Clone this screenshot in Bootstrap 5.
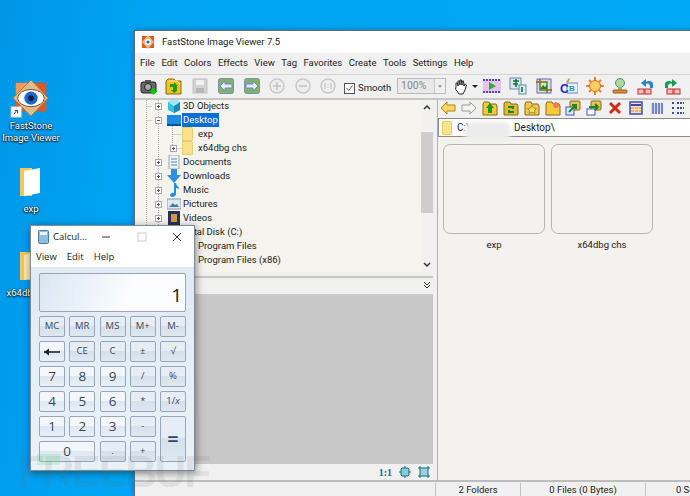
<!DOCTYPE html>
<html lang="en">
<head>
  <meta charset="UTF-8">
  <title>FastStone Image Viewer 7.5</title>
  <link href="https://cdn.jsdelivr.net/npm/bootstrap@5.3.1/dist/css/bootstrap.min.css" rel="stylesheet">
  <style>
    html, body { height: 100%; overflow: hidden; }
    body { background: #00a0ee; font-family: Roboto, sans-serif; font-size: 9.5px; color: #1c1c1c; }
    .desk { position: relative; width: 690px; height: 496px; overflow: hidden; background: linear-gradient(100deg, #0096e6, #00a4f2 20%, #00aaf8); }
    .desk-icon { position: absolute; width: 62px; color: #fff; text-align: center; line-height: 12px; font-size: 9.5px; text-shadow: 0 0 2px #000, 0 1px 2px #000; }
    .fsv-win { position: absolute; left: 134px; top: 30px; width: 560px; height: 467px; background: #f0f0f0; border: 1px solid #56707f; box-shadow: 0 0 6px rgba(0,0,0,.3); display: flex; flex-direction: column; }
    .fsv-title { height: 22px; background: #fff; gap: 7px; padding-left: 6px; flex: none; }
    .fsv-menu { height: 21px; background: #f0f0f0; gap: 6.5px; padding-left: 5px; flex: none; }
    .fsv-tools { height: 26px; position: relative; border-top: 1px solid #d4d4d0; border-bottom: 2px solid #c6c6c2; flex: none; }
    .tb-ic { position: absolute; top: 0; }
    .fsv-tools .tb-ic { top: 2px; }
    .fsv-body { flex: 1; min-height: 0; }
    .left-col { width: 298px; display: flex; flex-direction: column; flex: none; }
    .col-gutter { width: 5px; border-right: 1px solid #b0b0ae; flex: none; }
    .tree-wrap { height: 172px; background: #f4f3ee; overflow: hidden; position: relative; flex: none; }
    .tree-lines { position: absolute; left: 0; top: 0; }
    .tree-list { position: relative; margin-top: -1px; }
    .tree-row { height: 14px; display: flex; align-items: center; white-space: nowrap; position: relative; }
    .exp-box { width: 7px; height: 7px; flex: none; display: block; }
    .tree-ic { width: 14px; height: 14px; flex: none; margin: 0 2px 0 5px; }
    .sel-row { background: #0a6fd4; color: #fff; padding: 0 1px; line-height: 14px; margin-left: -1px; }
    .scroll-bar { position: absolute; right: 0; top: 0; bottom: 0; width: 12px; background: #f1f1ee; }
    .scroll-thumb { position: absolute; left: 0; right: 0; top: 32px; height: 81px; background: #cdcdcd; }
    .scroll-up { position: absolute; left: 2px; top: 4px; }
    .scroll-down { position: absolute; left: 2px; bottom: 4px; }
    .split-bar { height: 22px; background: #f0f0f0; position: relative; flex: none; }
    .split-line { position: absolute; left: 0; right: 0; top: 4px; height: 2px; background: #c6c6c2; }
    .split-chev { position: absolute; right: 2px; top: 9px; }
    .preview-box { height: 170px; background: #c8c8c8; flex: none; }
    .preview-foot { height: 16px; gap: 7px; padding-right: 3px; color: #117070; font-family: "Liberation Serif", serif; font-weight: 700; font-size: 10px; flex: none; }
    .right-col { flex: 1; display: flex; flex-direction: column; background: #f3f2ee; min-width: 0; }
    .nav-tools { height: 18px; position: relative; background: #f0f0f0; flex: none; }
    .addr-bar { height: 19px; background: #fff; border: 1px solid #8a8a8a; border-right: 0; padding-left: 3px; gap: 5px; position: relative; flex: none; font-size: 10px; }
    .addr-blur { position: absolute; left: 25px; top: 3px; width: 47px; height: 19px; background: #ececec; border-radius: 8px; filter: blur(2px); }
    .thumb-list { padding: 7px 5px; gap: 6px; }
    .thumb-cell { width: 102px; text-align: center; }
    .thumb-box { height: 90px; border: 1px solid #b5b5b2; border-radius: 7px; margin-bottom: 4px; }
    .fsv-status { height: 16px; background: #f0f0f0; border-top: 2px solid #bdbdbd; flex: none; position: relative; }
    .stat-cell { position: absolute; top: 1px; bottom: 0; border-left: 1px solid #c2c2c2; text-align: center; line-height: 14px; white-space: nowrap; }
    .calc-win { position: absolute; left: 30px; top: 225px; width: 165px; height: 246px; background: linear-gradient(#dfe9f4, #eaf1f8); border: 1px solid #7f8a96; box-shadow: 1px 2px 8px rgba(0,0,0,.45); font-family: "Open Sans", sans-serif; }
    .calc-title { height: 22px; background: #fff; padding-left: 7px; gap: 4px; font-size: 9.5px; position: relative; }
    .calc-menu { height: 19px; background: #fff; gap: 10px; padding-left: 5px; font-size: 9.5px; }
    .calc-disp { margin: 6px 8px 3px; height: 39px; border: 1px solid #98a5b4; border-radius: 2px; background: linear-gradient(110deg, #dbe6f3, #fafcfe 60%); text-align: right; font-size: 19px; line-height: 43px; padding-right: 3px; color: #222; }
    .calc-grid { display: grid; grid-template-columns: repeat(5, 26px); grid-auto-rows: 21px; gap: 4px 4.25px; padding: 0 8px; }
    .calc-key { border: 1px solid #98a7b8; border-radius: 2px; background: linear-gradient(#f3f7fb 45%, #dde7f1 50%, #e9f0f7); color: #39475a; font-size: 13.5px; display: flex; align-items: center; justify-content: center; }
    .calc-key.k-fn { background: linear-gradient(#e6edf5 45%, #d5e0eb 50%, #dfe8f1); font-size: 9.5px; font-weight: 500; }
    .k-wide { grid-column: span 2; }
    .calc-key.k-tall { grid-row: span 2; font-size: 20px; font-weight: 600; }
    .win-ctl { position: absolute; top: 5px; }
    .water-mark { position: absolute; left: 18px; top: 450px; font-family: "Liberation Sans", sans-serif; font-weight: 700; font-size: 44px; letter-spacing: -2.5px; color: rgba(110,110,110,.13); line-height: 44px; pointer-events: none; }
    .water-tab { position: absolute; left: 37px; top: 454px; width: 23px; height: 11px; background: rgba(120,220,150,.28); }
    .smooth-chk { left: 209px; top: 6px; gap: 3px; }
    .smooth-box { width: 11px; height: 11px; border: 1px solid #555; background: #fff; display: block; }
    .zoom-combo { left: 262px; top: 3px; width: 49px; height: 16px; background: #e9e9e9; border: 1px solid #bbb; color: #888; padding-left: 3px; line-height: 14px; font-size: 10.5px; }
    .zoom-btn { position: absolute; right: 0; top: 0; bottom: 0; width: 11px; background: #f0f0f0; border-left: 1px solid #ccc; }
    .zoom-btn::after { content: ""; position: absolute; left: 3px; top: 6px; border: 2px solid transparent; border-top: 3px solid #999; }
    .hand-arrow { left: 337px; top: 10px; width: 0; height: 0; border: 3px solid transparent; border-top-color: #222; }
  </style>
</head>
<body>
<div class="desk">
  <div class="desk-icon" style="left:0;top:80px">
    <svg width="44" height="40" viewBox="0 0 44 42" class="d-block mx-auto">
      <rect x="6" y="3" width="32" height="30" fill="#e8561f"/>
      <rect x="6" y="3" width="14" height="14" fill="#f39a5a"/>
      <path d="M22 0L40 19 22 38 3 19z" fill="#e0bd86" stroke="#a97a44"/>
      <ellipse cx="22" cy="19" rx="14" ry="9" fill="#fff" stroke="#6b4a2c"/>
      <circle cx="22" cy="19" r="7" fill="#1f66c9"/><circle cx="22" cy="19" r="3" fill="#0b1d45"/>
      <rect x="1" y="28" width="11" height="11" fill="#fff" stroke="#bbb"/>
      <path d="M4 36l3-4M5 32h3v3" stroke="#1a3f8a" fill="none"/>
    </svg>
    <div class="desk-label">FastStone<br>Image Viewer</div>
  </div>
  <div class="desk-icon" style="left:0;top:165px">
    <svg width="30" height="34" viewBox="0 0 30 34" class="d-block mx-auto">
      <path d="M4 3h12v28H4z" fill="#f1c65c"/><path d="M8 6l16-3v25l-16 3z" fill="#fff"/>
    </svg>
    <div class="mt-1">exp</div>
  </div>
  <div class="desk-icon" style="left:0;top:249px">
    <svg width="30" height="34" viewBox="0 0 30 34" class="d-block mx-auto">
      <path d="M4 3h12v28H4z" fill="#f1c65c"/><path d="M8 6l16-3v25l-16 3z" fill="#f6e7b4"/>
    </svg>
    <div class="mt-1">x64dbg chs</div>
  </div>

  <div class="fsv-win">
    <div class="fsv-title d-flex align-items-center">
      <svg width="14" height="14" viewBox="0 0 14 14"><rect x="1" y="1" width="12" height="12" fill="#e2561f"/><path d="M7 0l6 7-6 7-6-7z" fill="#e0bd86"/><circle cx="7" cy="7" r="3" fill="#fff"/><circle cx="7" cy="7" r="1.600" fill="#1f66c9"/></svg>
      <span>FastStone Image Viewer 7.5</span>
    </div>
    <div class="fsv-menu d-flex align-items-center">
      <span>File</span><span>Edit</span><span>Colors</span><span>Effects</span><span>View</span><span>Tag</span><span>Favorites</span><span>Create</span><span>Tools</span><span>Settings</span><span>Help</span>
    </div>
    <div class="fsv-tools" id="mainTools"></div>
    <div class="fsv-body d-flex">
      <div class="left-col">
        <div class="tree-wrap">
          <svg class="tree-lines" width="60" height="172">
            <path d="M11.500 0v172M23.500 0v172M11.500 6.500h5M11.500 20.500h5M37.500 26v22M37.500 34.500h10M37.500 48.500h10" stroke="#b0b0b0" stroke-dasharray="1 1" fill="none"/>
          </svg>
          <div id="treeRows" class="tree-list"></div>
          <div class="scroll-bar">
            <svg class="scroll-up" width="8" height="6" viewBox="0 0 8 6"><path d="M1 5l3-3 3 3" fill="none" stroke="#333" stroke-width="1.500"/></svg>
            <div class="scroll-thumb"></div>
            <svg class="scroll-down" width="8" height="6" viewBox="0 0 8 6"><path d="M1 1l3 3 3-3" fill="none" stroke="#333" stroke-width="1.500"/></svg>
          </div>
        </div>
        <div class="split-bar">
          <div class="split-line"></div>
          <svg class="split-chev" width="8" height="8" viewBox="0 0 8 8"><path d="M1 1l3 3 3-3M1 4l3 3 3-3" fill="none" stroke="#333"/></svg>
        </div>
        <div class="preview-box"></div>
        <div class="preview-foot d-flex align-items-center justify-content-end">
          <span>1:1</span>
          <svg width="12" height="12" viewBox="0 0 12 12"><path d="M3 2h6l1 1v6l-1 1H3l-1-1V3z" fill="#8cc8dc" stroke="#117070"/><path d="M6 0v2M6 10v2M0 6h2M10 6h2" stroke="#117070"/></svg>
          <svg width="12" height="12" viewBox="0 0 12 12"><rect x="2" y="2" width="8" height="8" fill="#9ccce0" stroke="#117070"/><path d="M0 2h2V0M10 0v2h2M12 10h-2v2M2 12v-2H0" fill="none" stroke="#117070"/></svg>
        </div>
      </div>
      <div class="col-gutter"></div>
      <div class="right-col">
        <div class="nav-tools" id="navTools"></div>
        <div class="addr-bar d-flex align-items-center">
          <svg width="10" height="14" viewBox="0 0 10 14"><path d="M.500.500h9v13h-9z" fill="#fbe08e" stroke="#eccb6a"/></svg>
          <span>C:\</span><span style="margin-left:39px">Desktop\</span>
          <span class="addr-blur"></span>
        </div>
        <div class="thumb-list d-flex">
          <div class="thumb-cell"><div class="thumb-box"></div>exp</div>
          <div class="thumb-cell"><div class="thumb-box"></div>x64dbg chs</div>
        </div>
      </div>
    </div>
    <div class="fsv-status">
      <div class="stat-cell" style="left:300px;width:85px">2 Folders</div>
      <div class="stat-cell" style="left:385px;width:125px">0 Files (0 Bytes)</div>
      <div class="stat-cell" style="left:510px;width:105px">0 Selected</div>
    </div>
  </div>

  <div class="calc-win">
    <div class="calc-title d-flex align-items-center">
      <svg width="11" height="14" viewBox="0 0 11 14"><rect x=".5" y=".5" width="10" height="13" rx="1" fill="#8fc0e4" stroke="#4b7ba3"/><rect x="2" y="2" width="7" height="3" fill="#eef6fc"/></svg>
      <span>Calcul...</span>
      <svg class="win-ctl" style="left:70px" width="10" height="12" viewBox="0 0 10 12"><path d="M1 6h8" stroke="#333"/></svg>
      <svg class="win-ctl" style="left:106px" width="10" height="12" viewBox="0 0 10 12"><rect x="1" y="2" width="8" height="8" fill="none" stroke="#ccc"/></svg>
      <svg class="win-ctl" style="left:141px" width="10" height="12" viewBox="0 0 10 12"><path d="M1 2l8 8M9 2l-8 8" stroke="#333"/></svg>
    </div>
    <div class="calc-menu d-flex align-items-center"><span>View</span><span>Edit</span><span>Help</span></div>
    <div class="calc-disp">1</div>
    <div class="calc-grid mt-1" id="calcKeys"></div>
  </div>
  <div class="water-tab"></div>
  <div class="water-mark">FREEBUF</div>
</div>
<script src="https://cdn.jsdelivr.net/npm/bootstrap@5.3.1/dist/js/bootstrap.bundle.min.js"></script>
<script>
  // toolbar glyphs, drawn on a 18x18 box
  const glyphs = {
    camera: '<rect x="1" y="5" width="15" height="11" rx="2" fill="#6a6a6a" stroke="#222"/><circle cx="8" cy="10" r="3.500" fill="#aaa" stroke="#222"/><rect x="5" y="3" width="6" height="2" fill="#555"/><path d="M12 11h3v3h2.500L13.500 18 9.500 14H12z" fill="#0c0"/>',
    open: '<path d="M1 4l2-2h6l2 2h5v13H1z" fill="#f2c21e" stroke="#8a6a10"/><path d="M4 4h8l3 3" fill="none" stroke="#fff2a0"/><path d="M5 7h4V5l4 4h-1v5l-3 2-3-3h2v-3H5z" fill="#1f9a12"/>',
    save: '<rect x="2" y="2" width="14" height="14" fill="#d2d2d2" stroke="#c0c0c0"/><rect x="5" y="3" width="8" height="5" fill="#efefef"/><rect x="5" y="11" width="8" height="5" fill="#b8b8b8"/>',
    left: '<rect x="1.500" y="1.500" width="15" height="15" rx="2" fill="#7fb16f" stroke="#7a93a8"/><path d="M3 9l5-5v3h7v4H8v3z" fill="#e6ecfb" stroke="#7486c4"/>',
    right: '<rect x="1.500" y="1.500" width="15" height="15" rx="2" fill="#7fb16f" stroke="#7a93a8"/><path d="M15 9l-5-5v3H3v4h7v3z" fill="#e6ecfb" stroke="#7486c4"/>',
    plus: '<circle cx="9" cy="9" r="7" fill="#eee" stroke="#c8c8c8" stroke-width="1.500"/><path d="M9 5v8M5 9h8" stroke="#c0c0c0" stroke-width="1.500"/>',
    minus: '<circle cx="9" cy="9" r="7" fill="#eee" stroke="#c8c8c8" stroke-width="1.500"/><path d="M5 9h8" stroke="#c0c0c0" stroke-width="1.500"/>',
    one: '<circle cx="9" cy="9" r="7" fill="#eee" stroke="#c8c8c8" stroke-width="1.500"/><path d="M6 6v6M9 7v1M9 10v1M12 6v6" stroke="#bbb"/>',
    hand: '<path d="M4 10V6h1.500L6 9V4h1.500L8 8V3h1.500L10 8V4h1.500L12 9l1-2 1.500 1-1.500 5-2 4H7L3.500 12z" fill="#fff" stroke="#222"/>',
    film: '<rect x="0" y="2" width="18" height="14" fill="#e6c4ee"/><path d="M0 3h18M0 15h18" stroke="#4a4ab0" stroke-width="2" stroke-dasharray="2 1"/><path d="M6 5l7 4-7 4z" fill="#3aa83a"/>',
    resize: '<rect x="1" y="1" width="11" height="11" fill="#dbe8f4" stroke="#6a88b0"/><rect x="10" y="8" width="7" height="9" fill="#dbe8f4" stroke="#6a88b0"/><path d="M4 4h6M7 2v8M4 7h5M13 10v5" stroke="#0a7a2a" stroke-width="1.600"/>',
    crop: '<rect x="2" y="2" width="14" height="14" fill="#cfe0ee" stroke="#6a6ab0"/><path d="M5 2v11h12M1 5h11v11" stroke="#8a6a10" stroke-width="1.500" fill="none"/><path d="M5 12l3-4 2 2 2-2v4z" fill="#1a8a1a"/>',
    cb: '<rect x="7" y="6" width="11" height="10" fill="#eef" stroke="#6a88b0"/><path d="M6 5l3-4 1 1-2 4z" fill="#c89a5a"/><text x="0" y="16" font-size="12" font-weight="700" fill="#1a2ad0" font-family="Liberation Sans">C</text><text x="9" y="14" font-size="8" font-weight="700" fill="#129a9a" font-family="Liberation Sans">B</text>',
    sun: '<circle cx="9" cy="9" r="5.500" fill="#f6d060" stroke="#d06a1a"/><path d="M9 0v3M9 15v3M0 9h3M15 9h3M3 3l2 2M13 13l2 2M15 3l-2 2M5 13l-2 2" stroke="#ee7f30" stroke-width="2"/>',
    stamp: '<circle cx="9" cy="6" r="4.500" fill="#b0d8a0" stroke="#5a8a6a"/><rect x="7" y="10" width="4" height="3" fill="#8ab88a"/><rect x="2" y="13" width="14" height="3" rx="1" fill="#e08a3a" stroke="#a05a1a"/>',
    undo: '<path d="M16 11V7c0-3-5-4-7-2V2L4 6l5 4V7c2-1 4 0 4 2v2z" fill="#2a82c0"/><rect x="1" y="12" width="6" height="5" fill="#f0c0c0" stroke="#c02a2a"/><rect x="8" y="12" width="6" height="5" fill="#f0c0c0" stroke="#c02a2a"/>',
    redo: '<path d="M2 11V7c0-3 5-4 7-2V2l5 4-5 4V7c-2-1-4 0-4 2v2z" fill="#1a9a5a"/><rect x="4" y="12" width="6" height="5" fill="#f0c0c0" stroke="#c02a2a"/><rect x="11" y="12" width="6" height="5" fill="#f0c0c0" stroke="#c02a2a"/>',
    navL: '<path d="M1 8l6-6v3h8v6H7v3z" fill="#fbd660" stroke="#b08414"/>',
    navR: '<path d="M15 8L9 2v3H1v6h8v3z" fill="#f4f4f4" stroke="#999"/>',
    fUp: '<path d="M1 4l1-2h5l1 2h6l1 2v9H1z" fill="#f8c93a" stroke="#8a6a10"/><path d="M8 3l4 5H10v5H6V8H4z" fill="#1a9a1a"/>',
    fRef: '<path d="M1 4l1-2h5l1 2h6l1 2v9H1z" fill="#e0b83a" stroke="#8a6a10"/><path d="M5 7h5v2M11 12H6v-2" stroke="#1a8a1a" stroke-width="2" fill="none"/>',
    fFav: '<path d="M1 4l1-2h5l1 2h6l1 2v9H1z" fill="#f0c850" stroke="#8a6a10"/><path d="M8 5l1.500 3 3 .5-2 2 .5 3-3-1.500L5 13.500l.5-3-2-2 3-.5z" fill="#f8e070" stroke="#b08a20"/>',
    fNew: '<path d="M1 4l1-2h5l1 2h6l1 2v9H1z" fill="#f8c93a" stroke="#8a6a10"/><circle cx="11" cy="5" r="3" fill="#f07a5a"/>',
    fCopy: '<rect x="5" y="1" width="10" height="9" rx="1" fill="#e8c060" stroke="#8a6a10"/><rect x="1" y="7" width="8" height="8" fill="#dfe8fa" stroke="#3a5ac0"/><path d="M4 12l6-6M7 5h4v4" stroke="#1a8a1a" stroke-width="2" fill="none"/>',
    fMove: '<rect x="5" y="1" width="10" height="9" rx="1" fill="#e8c060" stroke="#8a6a10"/><rect x="1" y="9" width="8" height="6" fill="#fff" stroke="#3a5ac0"/><path d="M3 7h8M9 4l3 3-3 3" stroke="#1a8a1a" stroke-width="2" fill="none"/>',
    del: '<path d="M3 3l10 10M13 3L3 13" stroke="#d02a10" stroke-width="3"/>',
    v1: '<rect x="2" y="2" width="12" height="12" fill="#f4e0c0" stroke="#3a4ab0" stroke-width="1.500"/><path d="M3 5h10" stroke="#3a4ab0" stroke-width="2"/><path d="M3 8h10M3 11h10" stroke="#e8862a" stroke-dasharray="3 1"/>',
    v2: '<path d="M2 3h12v11H2z" fill="#d8dcf0"/><path d="M4 3v11M7 3v11M10 3v11M13 3v11" stroke="#5a68b0" stroke-width="1.500"/>',
    v3: '<path d="M2 3h3M2 8h3M2 13h3M7 3h7M7 8h7M7 13h7" stroke="#3a4ab0" stroke-width="2" stroke-dasharray="2 1"/>'
  };
  const svgIcon = (name, size, x, box) => `<svg class="tb-ic" style="left:${x}px" width="${size}" height="${size}" viewBox="0 0 ${box} ${box}">${glyphs[name]}</svg>`;

  const mainIcons = [["camera",5],["open",30],["save",56],["left",82],["right",108],["plus",133],["minus",159],["one",184],["hand",317],["film",348],["resize",374],["crop",400],["cb",425],["sun",451],["stamp",476],["undo",502],["redo",528]];
  document.getElementById("mainTools").innerHTML = mainIcons.map(([n, x]) => svgIcon(n, 18, x, 18)).join("") +
    `<span class="position-absolute d-flex align-items-center smooth-chk"><svg class="smooth-box" viewBox="0 0 11 11"><path d="M2 5l2.500 3L9 2" fill="none" stroke="#333"/></svg>Smooth</span>
     <span class="position-absolute zoom-combo">100%<span class="zoom-btn"></span></span>
     <span class="position-absolute hand-arrow"></span>`;

  const navIcons = ["navL","navR","fUp","fRef","fFav","fNew","fCopy","fMove","del","v1","v2","v3"];
  document.getElementById("navTools").innerHTML = navIcons.map((n, i) => svgIcon(n, 16, 2 + i * 20.9, 16)).join("");

  // small tree icons on a 14x14 box
  const treeIcons = {
    cube: '<path d="M7 0l6 3v8l-6 3-6-3V3z" fill="#35c0dc"/><path d="M7 7l6-4v8l-6 3z" fill="#1b86b8"/><path d="M7 0l6 3-6 4-6-4z" fill="#9ce8f4"/>',
    desk: '<rect x="0" y="2" width="14" height="10" fill="#1e8ae8"/><path d="M0 12h14" stroke="#0a4ea0" stroke-width="2"/>',
    folder: '<path d="M.500.500h9l1 1v12h-10z" fill="#fbe08e" stroke="#eccb6a"/>',
    doc: '<rect x="2" y="0" width="10" height="14" fill="#eef2f6" stroke="#9aa"/><path d="M4 4h6M4 7h6M4 10h6" stroke="#5a88b0"/>',
    down: '<path d="M4 0h6v6h4l-7 8-7-8h4z" fill="#2f8fe0"/>',
    music: '<path d="M7 0h2c0 3 3 3 3 6-1-1-2-1-3-1v6c0 2-2 3-4 3s-3-3 0-4c1-.3 2 0 2 0z" fill="#1e90ec"/>',
    pic: '<rect x="0" y="2" width="14" height="10" fill="#dfe8f2" stroke="#8a9ab0"/><path d="M2 10l4-4 2 2 2-1 2 3z" fill="#4a7a9a"/>',
    film: '<rect x="1" y="0" width="12" height="14" fill="#2a3050"/><rect x="4" y="3" width="6" height="8" fill="#d09a4a"/>',
    disk: '<rect x="0" y="4" width="14" height="7" fill="#c4c4c4" stroke="#888"/>'
  };
  const expBox = sign => `<svg class="exp-box" viewBox="0 0 7 7"><rect x=".5" y=".5" width="6" height="6" fill="#fff" stroke="#aaa"/><path d="${sign === "p" ? "M2 3.500h3M3.500 2v3" : "M2 3.500h3"}" stroke="#555"/></svg>`;

  // tree rows: indent, expander, icon, label, selected
  const tree = [
    [20, "p", "cube", "3D Objects"], [20, "m", "desk", "Desktop", 1],
    [35, "", "folder", "exp"], [35, "p", "folder", "x64dbg chs"],
    [20, "p", "doc", "Documents"], [20, "p", "down", "Downloads"], [20, "p", "music", "Music"],
    [20, "p", "pic", "Pictures"], [20, "p", "film", "Videos"],
    [20, "p", "disk", "Total Disk (C:)"], [35, "", "folder", "Program Files"], [35, "", "folder", "Program Files (x86)"]
  ];
  document.getElementById("treeRows").innerHTML = tree.map(([x, e, ic, t, s]) => `
    <div class="tree-row" style="padding-left:${x}px">
      ${e ? expBox(e) : `<span class="exp-box"></span>`}
      <svg class="tree-ic" viewBox="0 0 14 14">${treeIcons[ic]}</svg>
      <span class="${s ? "sel-row" : ""}">${t}</span>
    </div>`).join("");

  const backArrow = '<svg width="18" height="8" viewBox="0 0 18 8"><path d="M1 4h16" stroke="#1c2530" stroke-width="1.600"/><path d="M1 4l5-3.500v7z" fill="#1c2530"/></svg>';
  const keys = ["MC","MR","MS","M+","M-",backArrow,"CE","C","±","√","7","8","9","/","%","4","5","6","*","1/<i>x</i>","1","2","3","-","=","0",".","+"];
  const isFn = k => !/^[0-9]$/.test(k) && k !== backArrow;
  document.getElementById("calcKeys").innerHTML = keys.map(k => {
    let cls = "calc-key";
    if (isFn(k)) cls += " k-fn";
    if (k === "0") cls += " k-wide";
    if (k === "=") cls += " k-tall";
    return `<div class="${cls}">${k}</div>`;
  }).join("");
</script>
</body>
</html>
